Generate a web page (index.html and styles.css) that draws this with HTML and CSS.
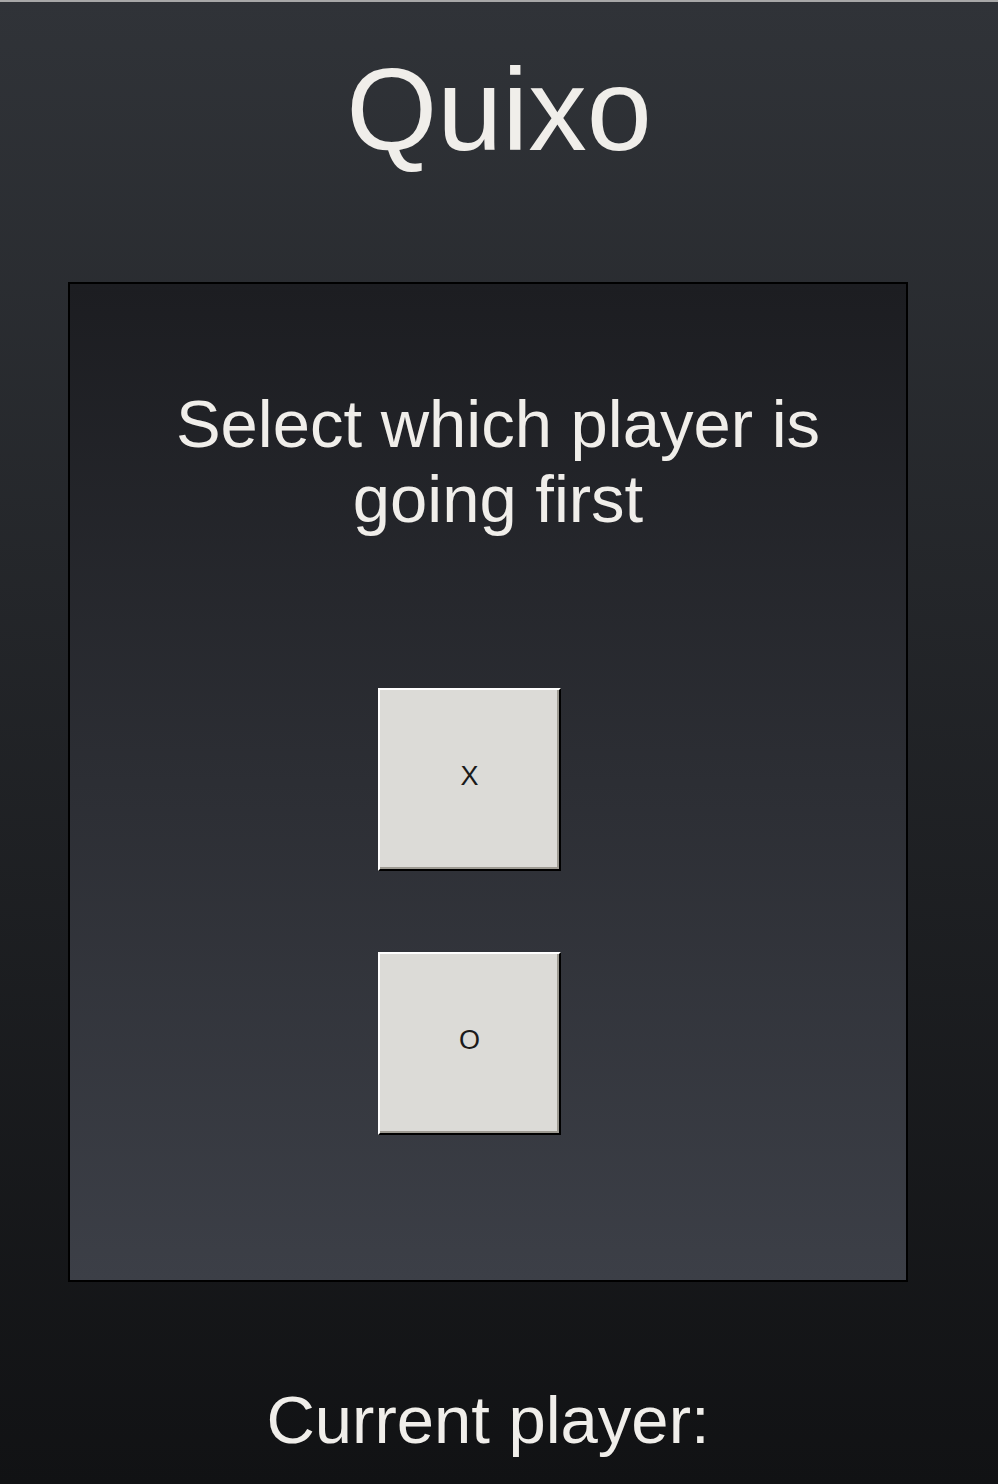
FILE: index.html
```html
<!DOCTYPE html>
<html lang="en">
<head>
  <meta charset="UTF-8">
  <meta name="viewport" content="width=device-width, initial-scale=1.0">
  <title>Quixo</title>
  <link rel="stylesheet" href="styles.css">
</head>
<body>
  <h1 class="title">Quixo</h1>
  <div class="board">
    <p class="prompt">Select which player is going first</p>
    <div class="choices">
      <button class="choice">X</button>
      <button class="choice">O</button>
    </div>
  </div>
  <p class="current">Current player:</p>
</body>
</html>
```

FILE: styles.css
```css
body {
  margin: 0;
  min-height: 100vh;
  box-sizing: border-box;
  border-top: 2px solid #a8a8a8;
  background: linear-gradient(#303338, #111214);
  font-family: 'Liberation Sans', Arial, sans-serif;
  color: #f0eeea;
}

.title {
  margin: 41px 0 0;
  font-size: 117px;
  font-weight: normal;
  line-height: 134px;
  text-align: center;
}

.board {
  width: 840px;
  height: 1000px;
  box-sizing: border-box;
  margin: 105px 0 0 68px;
  padding: 102px 0 0 20px;
  border: 2px solid #000;
  background: linear-gradient(#1c1d21, #3c3f47);
  display: flex;
  flex-direction: column;
  align-items: center;
}

.prompt {
  margin: 0;
  max-width: 700px;
  font-size: 67px;
  line-height: 75px;
  text-align: center;
}

.choices {
  display: flex;
  flex-direction: column;
  gap: 81px;
  margin-top: 152px;
  margin-right: 57px;
}

.choice {
  width: 183px;
  height: 183px;
  box-sizing: border-box;
  padding: 0 0 6px;
  border: 2px solid;
  border-color: #fff #000 #000 #fff;
  box-shadow: inset -2px -2px 0 #9d9a92;
  background-color: #dcdbd7;
  font-family: 'Liberation Sans', Arial, sans-serif;
  font-size: 27px;
  color: #1a1a1a;
  cursor: pointer;
}

.current {
  width: 840px;
  margin: 100px 0 0 68px;
  font-size: 67px;
  line-height: 75px;
  text-align: center;
}
```
